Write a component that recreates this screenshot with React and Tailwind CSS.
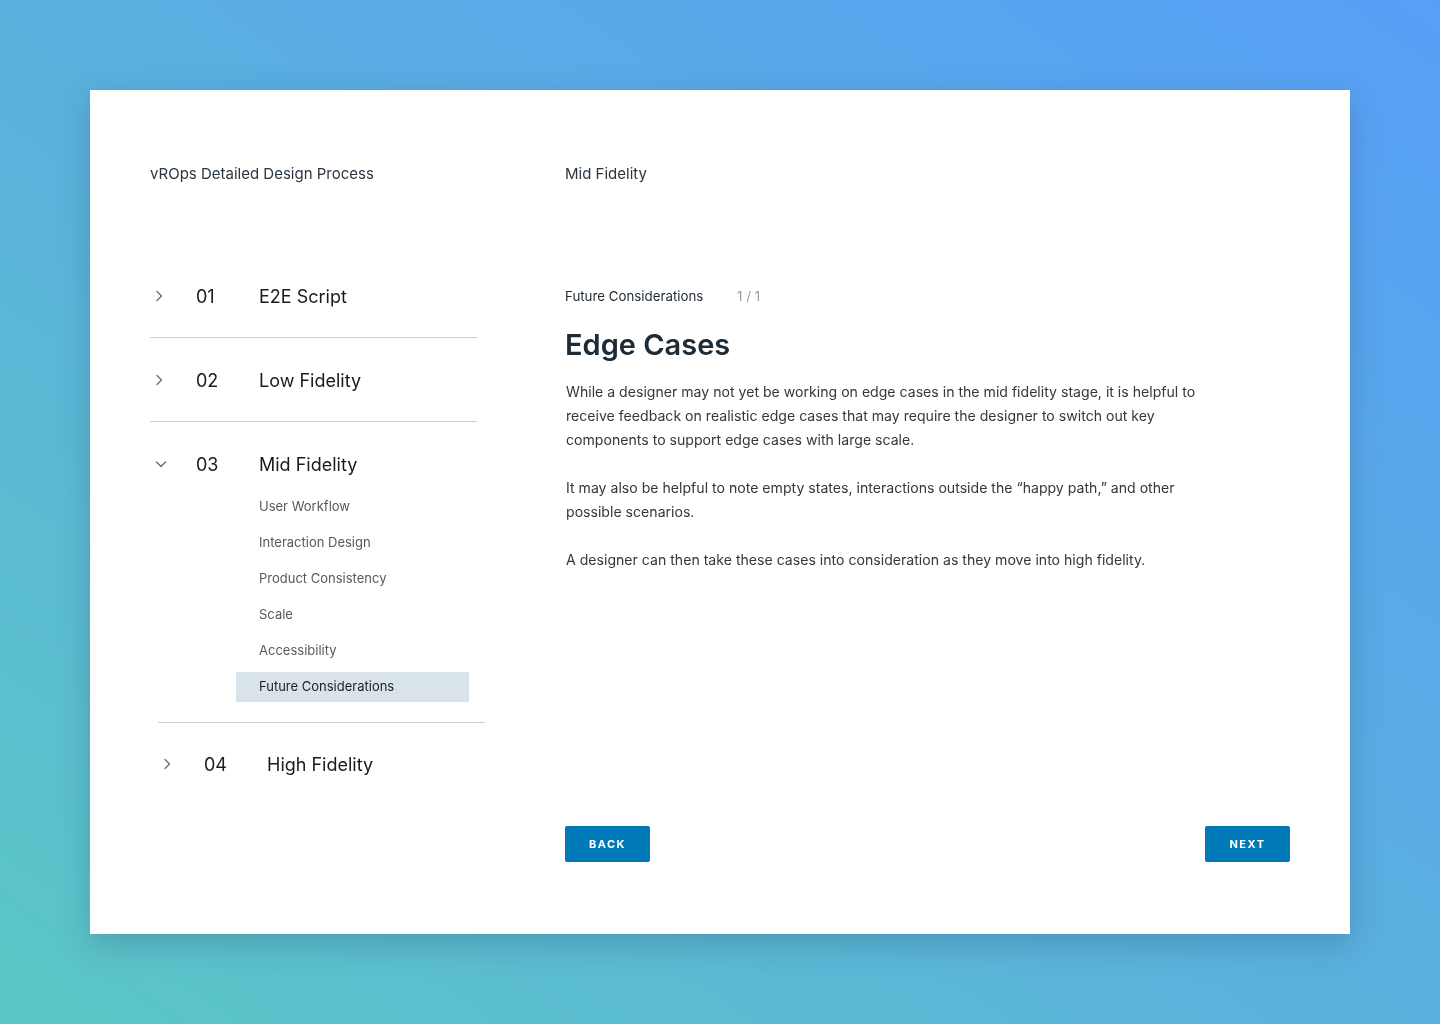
import React from 'react';

const ChevronRight = () => (
    <svg width="10" height="14" viewBox="0 0 10 14" fill="none" stroke="#6b6f73" strokeWidth="1.4" strokeLinecap="round" strokeLinejoin="round">
        <path d="M3 2.5 L7.5 7 L3 11.5" />
    </svg>
);

const ChevronDown = () => (
    <svg width="14" height="10" viewBox="0 0 14 10" fill="none" stroke="#6b6f73" strokeWidth="1.4" strokeLinecap="round" strokeLinejoin="round">
        <path d="M2.5 3 L7 7.5 L11.5 3" />
    </svg>
);

const subItems = [
    'User Workflow',
    'Interaction Design',
    'Product Consistency',
    'Scale',
    'Accessibility',
    'Future Considerations',
];

// one section header line: chevron, number, title
const SectionHead = ({ num, title, open }) => (
    <div className="flex h-[28px] items-center">
        <div className="flex w-[46px] items-center pl-[4px]">
            {open ? <ChevronDown /> : <ChevronRight />}
        </div>
        <div className="w-[63px] text-[18px] text-[#1a1a1a]">{num}</div>
        <div className="text-[18px] text-[#1a1a1a]">{title}</div>
    </div>
);

const Section = ({ num, title, last }) => (
    <div className={last ? 'pt-[27px] pb-[28px]' : 'border-b border-[#cfcfcf] pt-[28px] pb-[27px]'}>
        <SectionHead num={num} title={title} />
    </div>
);

export default function App() {
    return (
        <div
            className="min-h-screen w-full pt-[90px] pb-[90px]"
            style={{ fontFamily: 'Inter, "Noto Sans", sans-serif' }}
        >
            <div className="fixed inset-0 -z-10 bg-[linear-gradient(to_top_right,#5cc7c6,#5ab0de_50%,#589ff8)]" />
            <div className="mx-auto flex h-[844px] w-[1260px] bg-white px-[60px] pt-[74px] pb-[72px] shadow-[0_10px_30px_rgba(30,60,100,0.25)]">
                {/* left column */}
                <aside className="w-[415px] shrink-0">
                    <div className="h-[20px] text-[15px] leading-[20px] text-[#2b3640]">vROps Detailed Design Process</div>
                    <nav className="mt-[70px] w-[327px]">
                        <Section num="01" title="E2E Script" />
                        <Section num="02" title="Low Fidelity" />
                        <div className="pt-[28px] pb-[20px]">
                            <SectionHead num="03" title="Mid Fidelity" open />
                            <ul className="mt-[14px] ml-[86px] flex w-[233px] flex-col gap-[6px]">
                                {subItems.map((s, i) => (
                                    <li
                                        key={s}
                                        className={
                                            i === subItems.length - 1
                                                ? 'flex h-[30px] items-center bg-[#d8e3ea] pl-[23px] text-[13px] text-[#1f1f1f]'
                                                : 'flex h-[30px] items-center pl-[23px] text-[13px] text-[#555a5e]'
                                        }
                                    >
                                        {s}
                                    </li>
                                ))}
                            </ul>
                        </div>
                        <div className="ml-2 w-[327px] border-t border-[#cfcfcf]">
                            <Section num="04" title="High Fidelity" last />
                        </div>
                    </nav>
                </aside>

                {/* right column */}
                <main className="flex flex-1 flex-col">
                    <div className="h-[20px] text-[15px] leading-[20px] text-[#2b3640]">Mid Fidelity</div>
                    <div className="mt-[103px] flex h-[20px] items-center text-[13.3px]">
                        <span className="w-[172px] text-[#1f2a33]">Future Considerations</span>
                        <span className="text-[#9a9fa3]">1 / 1</span>
                    </div>
                    <h1 className="mt-[20px] text-[29px] leading-[36px] font-semibold text-[#1c2b36]">Edge Cases</h1>
                    <div className="mt-[17px] w-[700px] pl-px text-[14.1px] leading-[24px] text-[#33383d]">
                        <p>
                            While a designer may not yet be working on edge cases in the mid fidelity stage, it is helpful to
                            <br />
                            receive feedback on realistic edge cases that may require the designer to switch out key
                            <br />
                            components to support edge cases with large scale.
                        </p>
                        <p className="mt-[24px]">
                            It may also be helpful to note empty states, interactions outside the “happy path,” and other
                            <br />
                            possible scenarios.
                        </p>
                        <p className="mt-[24px]">
                            A designer can then take these cases into consideration as they move into high fidelity.
                        </p>
                    </div>
                    <div className="mt-auto flex justify-between">
                        <button className="h-[36px] w-[85px] rounded-[2px] bg-[#0079b8] text-[11px] font-bold tracking-[1.5px] text-white">
                            BACK
                        </button>
                        <button className="h-[36px] w-[85px] rounded-[2px] bg-[#0079b8] text-[11px] font-bold tracking-[1.5px] text-white">
                            NEXT
                        </button>
                    </div>
                </main>
            </div>
        </div>
    );
}
